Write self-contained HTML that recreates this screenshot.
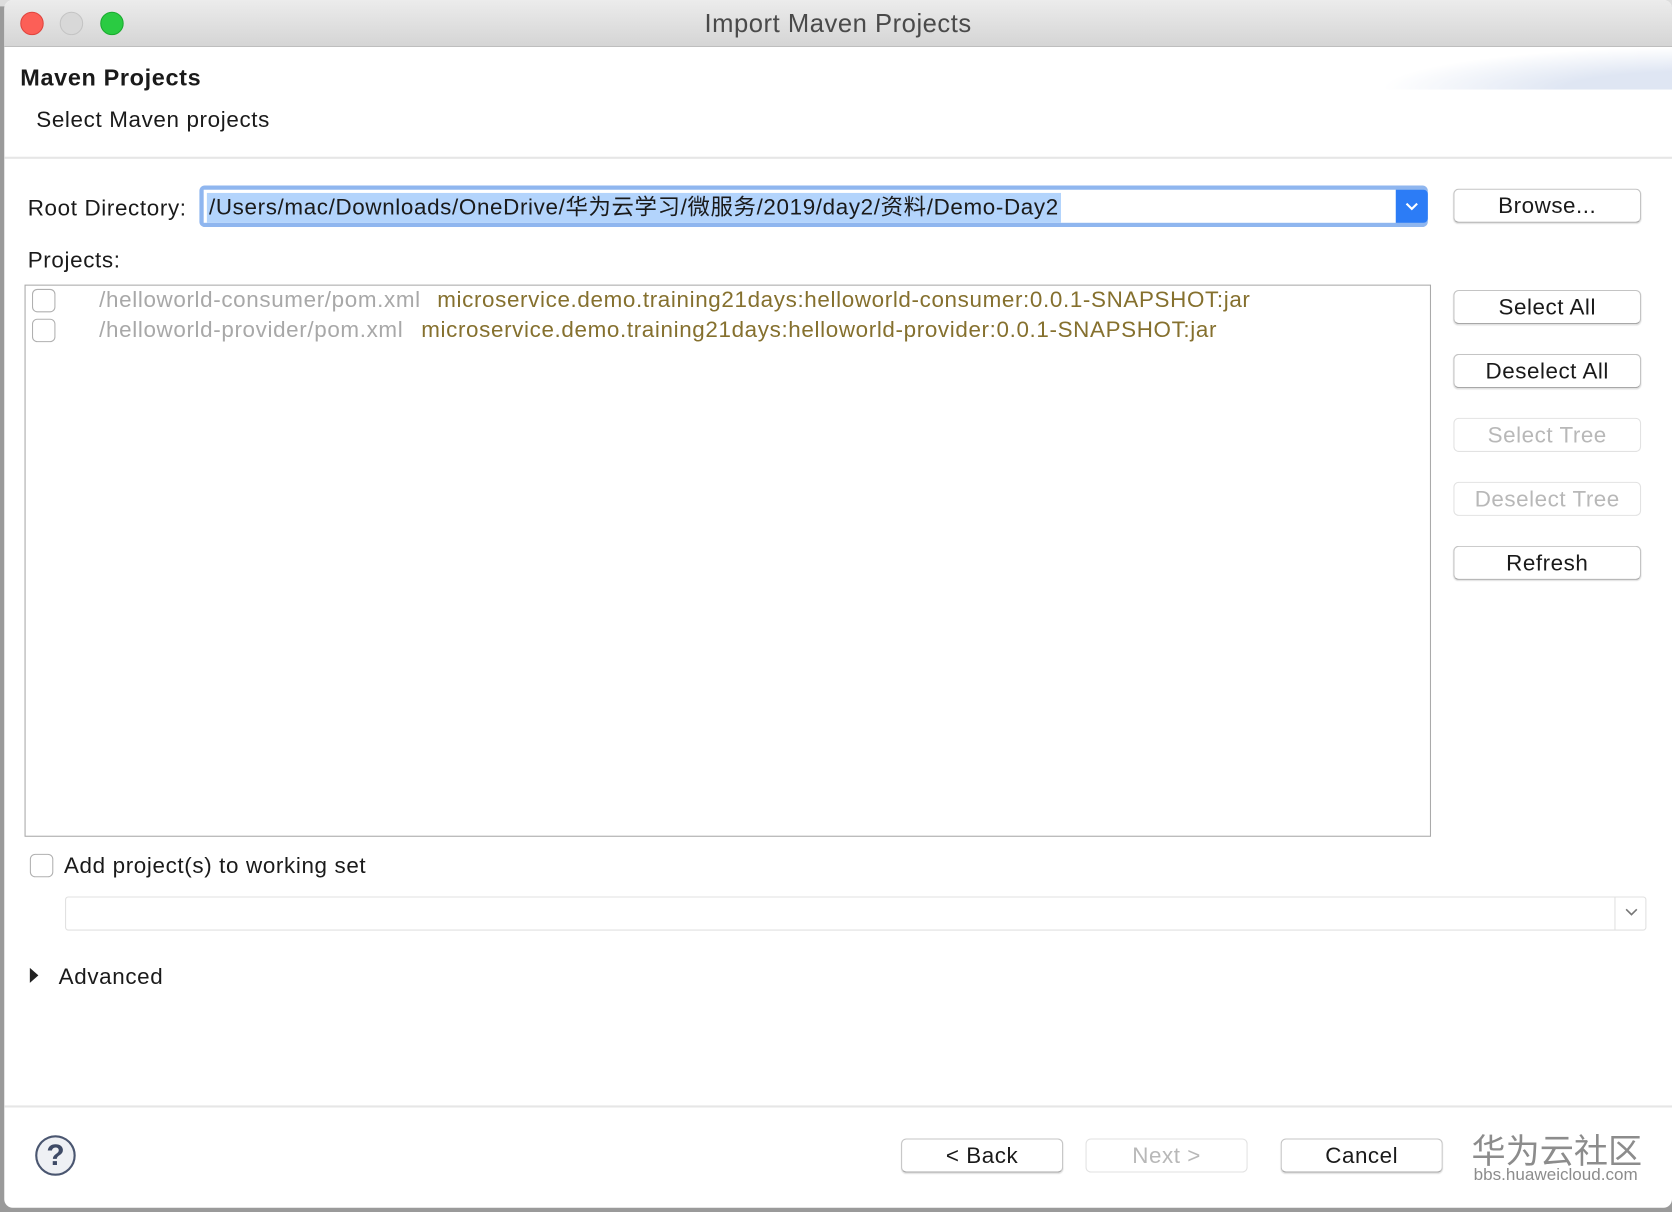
<!DOCTYPE html>
<html><head><meta charset="utf-8"><style>
html,body{margin:0;padding:0;width:1672px;height:1212px;overflow:hidden;background:#9a9a9a;}
#w{position:absolute;left:0;top:0;width:1568px;height:1137px;transform:scale(1.06633,1.06596);transform-origin:0 0;font-family:"Liberation Sans","Noto Sans CJK SC",sans-serif;color:#1a1a1a;}
.a{position:absolute;}
.win{left:4px;top:0;width:1564px;height:1133px;background:#fff;border-radius:8px;overflow:hidden;}
.tb{left:0;top:0;width:1564px;height:43px;background:linear-gradient(#ececec,#d5d5d5);border-bottom:1px solid #b8b8b8;}
.dot{width:22px;height:22px;border-radius:50%;top:11px;}
.t{font-size:21px;letter-spacing:.6px;white-space:nowrap;}
.btn{height:30px;border:1px solid #c4c4c4;border-bottom-color:#a8a8a8;border-radius:5px;background:#fff;font-size:21px;letter-spacing:.5px;text-align:center;line-height:31px;box-shadow:0 1px 1px rgba(0,0,0,.12);}
.dis{color:#b8b8b8;border-color:#e2e2e2;box-shadow:none;}
.cb{width:20px;height:20px;border:1px solid #b0b0b0;border-radius:5px;background:#fff;}
</style></head><body><div id="w">
<div class="a" style="left:0;top:0;width:1568px;height:6px;background:#ddd"></div>
<div class="a win">
 <div class="a tb"></div>
 <div class="a dot" style="left:15px;background:#fc5f57;border:1px solid #e0443e;box-sizing:border-box"></div>
 <div class="a dot" style="left:52px;background:#d8d8d8;border:1px solid #c4c4c4;box-sizing:border-box"></div>
 <div class="a dot" style="left:90px;background:#2acb42;border:1px solid #1aab2f;box-sizing:border-box"></div>
 <div class="a t" style="left:0;width:1564px;text-align:center;top:9px;font-size:24px;letter-spacing:.5px;color:#4a4a4a">Import Maven Projects</div>
 <div class="a" style="left:1290px;top:44px;width:300px;height:40px;background:radial-gradient(ellipse at 100% 100%,#dfe6f3 30%,rgba(255,255,255,0) 70%)"></div>
 <div class="a t" style="left:15px;top:60px;font-size:22px;font-weight:bold">Maven Projects</div>
 <div class="a t" style="left:30px;top:101px">Select Maven projects</div>
 <div class="a" style="left:0;top:147px;width:1564px;height:2px;background:#e6e6e6"></div>
 <div class="a t" style="left:22px;top:184px">Root Directory:</div>
 <div class="a" style="left:183px;top:174px;width:1152px;height:39px;border-radius:5px;background:#8fb6ef;"></div>
 <div class="a" style="left:187px;top:178px;width:1118px;height:31px;background:#fff;"></div>
 <div class="a" style="left:1305px;top:178px;width:30px;height:31px;background:#2c7cf6;border-radius:0 4px 4px 0"><svg width="30" height="31"><path d="M10 13l5 5 5-5" stroke="#fff" stroke-width="2" fill="none"/></svg></div>
 <div class="a t" style="left:190px;top:181px;background:#b3d4fc;padding:0 2px;height:28px;line-height:28px">/Users/mac/Downloads/OneDrive/华为云学习/微服务/2019/day2/资料/Demo-Day2</div>
 <div class="a btn" style="left:1359px;top:177px;width:174px">Browse...</div>
 <div class="a t" style="left:22px;top:233px">Projects:</div>
 <div class="a" style="left:19px;top:267px;width:1317px;height:516px;border:1px solid #aaa;background:#fff"></div>
 <div class="a cb" style="left:26px;top:271px"></div>
 <div class="a cb" style="left:26px;top:299px"></div>
 <div class="a t" style="left:89px;top:270px;color:#a8a8a8">/helloworld-consumer/pom.xml</div>
 <div class="a t" style="left:406px;top:270px;color:#85702e">microservice.demo.training21days:helloworld-consumer:0.0.1-SNAPSHOT:jar</div>
 <div class="a t" style="left:89px;top:298px;color:#a8a8a8">/helloworld-provider/pom.xml</div>
 <div class="a t" style="left:391px;top:298px;color:#85702e">microservice.demo.training21days:helloworld-provider:0.0.1-SNAPSHOT:jar</div>
 <div class="a btn" style="left:1359px;top:272px;width:174px">Select All</div>
 <div class="a btn" style="left:1359px;top:332px;width:174px">Deselect All</div>
 <div class="a btn dis" style="left:1359px;top:392px;width:174px">Select Tree</div>
 <div class="a btn dis" style="left:1359px;top:452px;width:174px">Deselect Tree</div>
 <div class="a btn" style="left:1359px;top:512px;width:174px">Refresh</div>
 <div class="a cb" style="left:24px;top:801px"></div>
 <div class="a t" style="left:56px;top:801px">Add project(s) to working set</div>
 <div class="a" style="left:57px;top:841px;width:1481px;height:30px;border:1px solid #e0e0e0;border-radius:3px"></div>
 <div class="a" style="left:1510px;top:842px;width:1px;height:30px;background:#e0e0e0"></div>
 <svg class="a" style="left:1514px;top:848px" width="24" height="16"><path d="M7 5l5 5 5-5" stroke="#777" stroke-width="1.5" fill="none"/></svg>
 <div class="a" style="left:24px;top:908px;width:0;height:0;border-left:8px solid #222;border-top:7px solid transparent;border-bottom:7px solid transparent"></div>
 <div class="a t" style="left:51px;top:905px">Advanced</div>
 <div class="a" style="left:0;top:1037px;width:1564px;height:2px;background:#e6e6e6"></div>
 <div class="a" style="left:29px;top:1065px;width:34px;height:34px;border:2px solid #4a5670;border-radius:50%;background:#eef0f4;color:#3e4a66;font-weight:bold;font-size:28px;text-align:center;line-height:34px">?</div>
 <div class="a btn" style="left:841px;top:1068px;width:150px">&lt; Back</div>
 <div class="a btn dis" style="left:1014px;top:1068px;width:150px">Next &gt;</div>
 <div class="a btn" style="left:1197px;top:1068px;width:150px">Cancel</div>
 <div class="a t" style="left:1376px;top:1055px;font-size:32px;letter-spacing:0;color:#8c8c8c">华为云社区</div>
 <div class="a t" style="left:1378px;top:1094px;font-size:16px;letter-spacing:0;color:#8c8c8c">bbs.huaweicloud.com</div>
</div>
</div></body></html>
